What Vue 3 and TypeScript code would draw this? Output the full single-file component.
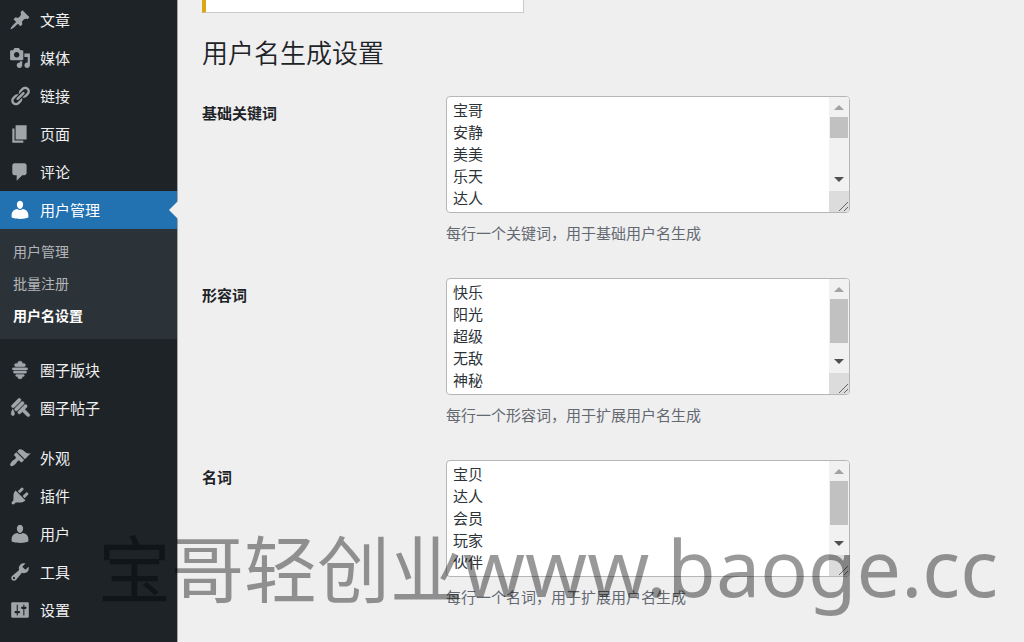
<script setup lang="ts">
import { ref } from 'vue'

interface MenuItem {
  label: string
  icon: string
  heavy?: boolean
  current?: boolean
  children?: { label: string; active?: boolean }[]
}

interface WordField {
  id: string
  label: string
  hint: string
  words: string
  thumb: number
}

const userIcon =
  'M10 9c-2.3 0-2.8-3.3-2.8-3.3C6.9 3.600 7.800 1.500 10 1.500s3.100 2.100 2.800 4.200c0 0-.5 3.300-2.800 3.300zM7.500 9.200c1.500 1.100 3.500 1.100 5 0C15.700 9.600 17.600 12 17.600 14.500v2.300s-3.700 1.300-7.600 1.300-7.600-1.300-7.600-1.300v-2.300C2.400 12 4.300 9.600 7.500 9.200z'

const menuGroups: MenuItem[][] = [
  [
    {
      label: '文章',
      icon: 'M10.44 3.02l1.82-1.82 6.36 6.35-1.83 1.82c-1.05-.68-2.48-.57-3.41.36l-.75.75c-.92.93-1.04 2.35-.35 3.41l-1.83 1.82-2.41-2.41-2.8 2.79c-.42.42-3.38 2.71-3.8 2.29s1.86-3.39 2.28-3.81l2.79-2.79L4.1 9.36l1.83-1.82c1.05.69 2.48.57 3.4-.36l.75-.75c.93-.92 1.05-2.35.36-3.41z',
    },
    {
      label: '媒体',
      icon: 'M13 11V4c0-.55-.45-1-1-1h-1.67L9 1H5L3.67 3H2c-.55 0-1 .45-1 1v7c0 .55.45 1 1 1h10c.55 0 1-.45 1-1zM7 4.5c1.38 0 2.5 1.12 2.5 2.5S8.38 9.5 7 9.5 4.5 8.38 4.5 7 5.62 4.5 7 4.5zM14 6h5v10.5c0 1.38-1.12 2.5-2.5 2.5S14 17.88 14 16.5s1.12-2.5 2.5-2.5c.17 0 .34.02.5.05V9h-3V6zm-4 8.05V13h2v3.5c0 1.38-1.12 2.5-2.5 2.5S7 17.88 7 16.5 8.12 14 9.5 14c.17 0 .34.02.5.05z',
    },
    {
      label: '链接',
      icon: 'M17.74 2.76c1.68 1.69 1.68 4.41 0 6.1l-1.53 1.52c-1.12 1.12-2.7 1.47-4.14 1.09l2.62-2.61.76-.77.76-.76c.84-.84.84-2.2 0-3.04-.84-.85-2.2-.85-3.04 0l-.77.76-3.38 3.38c-.37-1.44-.02-3.02 1.1-4.14l1.52-1.53c1.69-1.68 4.42-1.68 6.1 0zM8.59 13.43l5.34-5.34c.42-.42.42-1.1 0-1.52-.44-.43-1.13-.39-1.53 0l-5.33 5.34c-.42.42-.42 1.1 0 1.52.44.43 1.13.39 1.52 0zm-.76 2.29l4.14-4.15c.38 1.44.03 3.02-1.09 4.14l-1.52 1.53c-1.69 1.68-4.41 1.68-6.1 0-1.68-1.68-1.68-4.42 0-6.1l1.53-1.52c1.12-1.12 2.7-1.47 4.14-1.1l-4.14 4.15c-.85.84-.85 2.2 0 3.05.84.84 2.2.84 3.04 0z',
    },
    { label: '页面', icon: 'M6 15V2h10v13H6zm-1 1h8v2H3V5h2v11z' },
    {
      label: '评论',
      icon: 'M5 2h9c1.1 0 2 .9 2 2v7c0 1.1-.9 2-2 2h-2l-5 5v-5H5c-1.1 0-2-.9-2-2V4c0-1.1.9-2 2-2z',
    },
    {
      label: '用户管理',
      icon: userIcon,
      current: true,
      children: [{ label: '用户管理' }, { label: '批量注册' }, { label: '用户名设置', active: true }],
    },
  ],
  [
    {
      label: '圈子版块',
      heavy: true,
      icon: 'M13.5 7h-7C5.67 7 5 6.33 5 5.5S5.67 4 6.5 4h1.59C8.04 3.84 8 3.68 8 3.5 8 2.67 8.67 2 9.5 2h1c.83 0 1.5.67 1.5 1.5 0 .18-.04.34-.09.5h1.59c.83 0 1.5.67 1.5 1.5S14.33 7 13.5 7zM4 8h12c.55 0 1 .45 1 1s-.45 1-1 1H4c-.55 0-1-.45-1-1s.45-1 1-1zm1 3h10c.55 0 1 .45 1 1s-.45 1-1 1H5c-.55 0-1-.45-1-1s.45-1 1-1zm2 3h6c.55 0 1 .45 1 1s-.45 1-1 1h-1.09c.05.16.09.32.09.5 0 .83-.67 1.5-1.5 1.5h-1c-.83 0-1.5-.67-1.5-1.5 0-.18.04-.34.09-.5H7c-.55 0-1-.45-1-1s.45-1 1-1z',
    },
    {
      label: '圈子帖子',
      heavy: true,
      icon: 'M10.44 1.66c-.59-.58-1.54-.58-2.12 0L2.66 7.32c-.58.58-.58 1.53 0 2.12.6.6 1.56.56 2.12 0l5.66-5.66c.58-.58.59-1.53 0-2.12zm2.83 2.83c-.59-.59-1.54-.59-2.12 0l-5.66 5.66c-.59.58-.59 1.53 0 2.12.6.6 1.56.55 2.12 0l5.66-5.66c.58-.58.58-1.53 0-2.12zm1.06 6.72l4.18 4.18c.59.58.59 1.53 0 2.12s-1.54.59-2.12 0l-4.18-4.18-1.77 1.77c-.59.58-1.54.58-2.12 0-.59-.59-.59-1.54 0-2.13l5.66-5.65c.58-.59 1.53-.59 2.12 0 .58.58.58 1.53 0 2.12zM5 15c0-1.59-1.66-4-1.66-4S2 13.78 2 15s.6 2 1.34 2h.32C4.4 17 5 16.59 5 15z',
    },
  ],
  [
    {
      label: '外观',
      icon: 'M14.48 11.06L7.41 3.99l1.5-1.5c.5-.56 2.3-.47 3.51.32 1.21.8 1.43 1.28 2.91 2.1 1.18.64 2.45 1.26 4.45.85zm-.71.71L6.7 4.7 4.93 6.47c-.39.39-.39 1.02 0 1.41l1.06 1.06c.39.39.39 1.03 0 1.42-.6.6-1.43 1.11-2.21 1.69-.35.26-.7.53-1.01.84C1.43 14.23.4 16.08 1.4 17.07c.99 1 2.84-.03 4.18-1.36.31-.31.58-.66.85-1.02.57-.78 1.08-1.61 1.69-2.21.39-.39 1.02-.39 1.41 0l1.06 1.06c.39.39 1.02.39 1.41 0z',
    },
    {
      label: '插件',
      icon: 'M13.11 4.36L9.87 7.6 8 5.73l3.24-3.24c.35-.34 1.05-.2 1.56.32.52.51.66 1.21.31 1.55zm-8 1.77l.91-1.12 9.01 9.01-1.19.84c-.71.71-2.63 1.16-3.82 1.16H6.14L4.9 17.26c-.59.59-1.54.59-2.12 0-.59-.58-.59-1.53 0-2.12l1.24-1.24v-3.88c0-1.13.4-3.19 1.09-3.89zm7.26 3.97l3.24-3.24c.34-.35 1.04-.21 1.55.31.52.51.66 1.21.31 1.55l-3.24 3.25z',
    },
    { label: '用户', icon: userIcon },
    {
      label: '工具',
      icon: 'M16.68 9.77c-1.34 1.34-3.3 1.67-4.95.99l-5.41 6.52c-.99.99-2.59.99-3.58 0s-.99-2.59 0-3.57l6.52-5.42c-.68-1.65-.35-3.61.99-4.95 1.28-1.28 3.12-1.62 4.72-1.06l-2.89 2.89 2.82 2.82 2.86-2.87c.53 1.58.18 3.39-1.08 4.65zM3.81 16.21c.4.39 1.04.39 1.43 0 .4-.4.4-1.04 0-1.43-.39-.4-1.03-.4-1.43 0-.39.39-.39 1.03 0 1.43z',
    },
    {
      label: '设置',
      icon: 'M18 16V4c0-.55-.45-1-1-1H3c-.55 0-1 .45-1 1v12c0 .55.45 1 1 1h14c.55 0 1-.45 1-1zM8 11h1c.55 0 1 .45 1 1s-.45 1-1 1H8v1.5c0 .28-.22.5-.5.5s-.5-.22-.5-.5V13H6c-.55 0-1-.45-1-1s.45-1 1-1h1V5.5c0-.28.22-.5.5-.5s.5.22.5.5V11zm5-2h-1c-.55 0-1-.45-1-1s.45-1 1-1h1V5.5c0-.28.22-.5.5-.5s.5.22.5.5V7h1c.55 0 1 .45 1 1s-.45 1-1 1h-1v5.5c0 .28-.22.5-.5.5s-.5-.22-.5-.5V9z',
    },
  ],
]

const fields = ref<WordField[]>([
  {
    id: 'base-words',
    label: '基础关键词',
    hint: '每行一个关键词，用于基础用户名生成',
    words: '宝哥\n安静\n美美\n乐天\n达人',
    thumb: 21,
  },
  {
    id: 'adjectives',
    label: '形容词',
    hint: '每行一个形容词，用于扩展用户名生成',
    words: '快乐\n阳光\n超级\n无敌\n神秘',
    thumb: 44,
  },
  {
    id: 'nouns',
    label: '名词',
    hint: '每行一个名词，用于扩展用户名生成',
    words: '宝贝\n达人\n会员\n玩家\n伙伴',
    thumb: 44,
  },
])
</script>

<template>
  <div class="page">
    <nav class="sidebar">
      <ul v-for="(group, g) in menuGroups" :key="g" class="menu-group">
        <li v-for="item in group" :key="item.label">
          <a href="#" class="menu-link" :class="{ current: item.current }">
            <svg class="icon" :class="{ heavy: item.heavy }" viewBox="0 0 20 20" aria-hidden="true">
              <path :d="item.icon" fill-rule="evenodd" />
            </svg>
            <span class="menu-text">{{ item.label }}</span>
          </a>
          <ul v-if="item.children" class="submenu">
            <li v-for="child in item.children" :key="child.label">
              <a href="#" class="submenu-link" :class="{ active: child.active }">{{ child.label }}</a>
            </li>
          </ul>
        </li>
      </ul>
    </nav>

    <main class="content">
      <div class="notice"></div>
      <h1 class="title">用户名生成设置</h1>
      <form class="form" @submit.prevent>
        <div v-for="field in fields" :key="field.id" class="row">
          <label class="row-label" :for="field.id">{{ field.label }}</label>
          <div class="row-body">
            <div class="box">
              <textarea :id="field.id" v-model="field.words" rows="5" :aria-describedby="field.id + '-hint'"></textarea>
              <div class="scrollbar" aria-hidden="true">
                <svg class="arrow up" viewBox="0 0 20 20"><path d="M5 13l5-5 5 5z" /></svg>
                <div class="track">
                  <div class="thumb" :style="{ height: field.thumb + 'px' }"></div>
                </div>
                <svg class="arrow down" viewBox="0 0 20 20"><path d="M5 6h10l-5 5z" /></svg>
                <svg class="grip" viewBox="0 0 20 20"><path d="M10 19.500l9-9M15 19.500l4-4" /></svg>
              </div>
            </div>
            <p :id="field.id + '-hint'" class="hint">{{ field.hint }}</p>
          </div>
        </div>
      </form>
    </main>

    <div class="watermark"><span class="watermark-name">宝哥轻创业</span><span class="watermark-site">www.baoge.cc</span></div>
  </div>
</template>

<style>
body {
  margin: 0;
  background: #efeff0;
}
</style>

<style scoped>
.page {
  position: relative;
  display: flex;
  height: 100vh;
  overflow: hidden;
  background: #efeff0;
  color: #1d2327;
  font-family: "Noto Sans CJK SC", "Noto Sans", sans-serif;
  font-size: 15px;
}

ul {
  margin: 0;
  padding: 0;
  list-style: none;
}

a {
  text-decoration: none;
}

.sidebar {
  flex: 0 0 177px;
  padding-top: 1px;
  background: #1d2327;
  border-right: 1px solid #a3a5a7;
}

.menu-group + .menu-group {
  margin-top: 12px;
}

.menu-link {
  position: relative;
  display: flex;
  align-items: center;
  gap: 9px;
  height: 38px;
  padding-left: 9px;
  color: #f0f0f1;
}

.menu-text {
  padding-bottom: 2px;
}

.icon {
  width: 22px;
  height: 22px;
  fill: #a0a5aa;
}

.heavy {
  stroke: #a0a5aa;
  stroke-width: 0.4;
}

.current {
  background: #2271b1;
  color: #fff;
}

.current .icon {
  fill: #fff;
}

.current::after {
  content: "";
  position: absolute;
  top: 10px;
  right: -1px;
  border: 9px solid transparent;
  border-left-width: 0;
  border-right-color: #efeff0;
}

.submenu {
  padding: 6px 0 8px;
  background: #2c3338;
}

.submenu-link {
  display: block;
  padding-left: 13px;
  color: #b2b5b8;
  font-size: 14px;
  line-height: 32px;
}

.submenu-link.active {
  color: #fff;
  font-weight: 700;
}

.content {
  flex: 1;
  min-width: 0;
  padding: 0 24px;
}

.notice {
  box-sizing: border-box;
  max-width: 322px;
  height: 13px;
  background: #fff;
  border: 1px solid #c9cacc;
  border-top: 0;
  border-left: 4px solid #dba617;
}

.title {
  margin: 19px 0 24px;
  font-size: 26px;
  font-weight: 350;
  line-height: 40px;
}

.form {
  display: flex;
  flex-direction: column;
  gap: 33px;
}

.row {
  display: flex;
}

.row-label {
  flex: 0 0 244px;
  padding-top: 5px;
  font-weight: 700;
  line-height: 24px;
}

.row-body {
  flex: 1;
  min-width: 0;
}

.box {
  box-sizing: border-box;
  display: flex;
  max-width: 404px;
  height: 117px;
  overflow: hidden;
  background: #fff;
  border: 1px solid #b4b6b9;
  border-radius: 4px;
}

textarea {
  flex: 1;
  min-width: 0;
  margin: 0;
  padding: 2px 6px;
  border: 0;
  outline: 0;
  background: transparent;
  color: #2c3338;
  font: inherit;
  line-height: 22px;
  resize: none;
  overflow: hidden;
}

.scrollbar {
  display: flex;
  flex: 0 0 20px;
  flex-direction: column;
  background: #f1f1f1;
}

.arrow {
  width: 20px;
  height: 20px;
}

.up {
  fill: #a3a3a3;
}

.down {
  fill: #505050;
}

.track {
  flex: 1;
  padding: 0 1px;
}

.thumb {
  background: #c1c1c1;
}

.grip {
  width: 20px;
  height: 21px;
  background: #dcdcdc;
  fill: none;
  stroke: #666;
}

.hint {
  margin: 8px 0 0;
  color: #646970;
  line-height: 24px;
}

.watermark {
  position: absolute;
  bottom: -4px;
  left: 98px;
  color: rgba(0, 0, 0, 0.4);
  line-height: 110px;
  white-space: nowrap;
  pointer-events: none;
}

.watermark-name {
  font-size: 73px;
}

.watermark-site {
  font-family: "Noto Sans", sans-serif;
  font-size: 79px;
}
</style>
